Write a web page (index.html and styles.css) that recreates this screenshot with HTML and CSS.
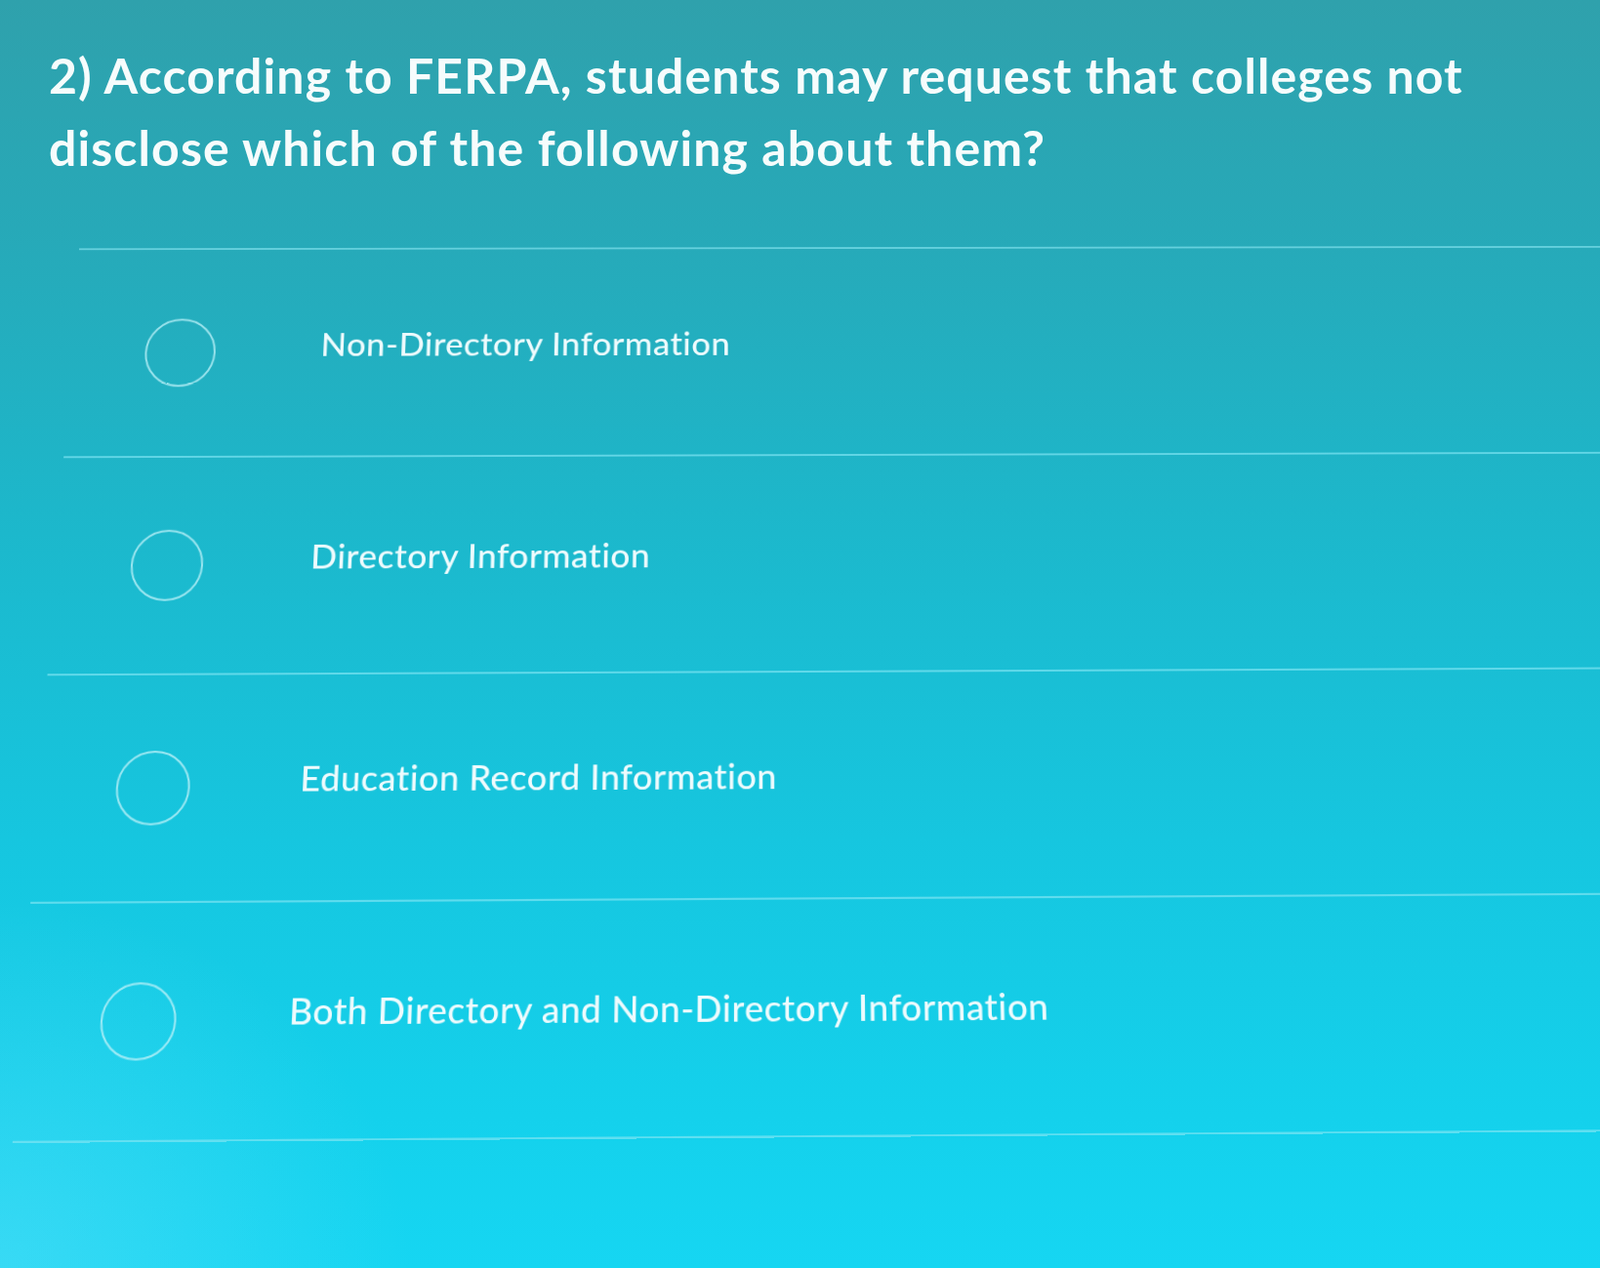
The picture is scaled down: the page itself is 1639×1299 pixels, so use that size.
FILE: index.html
```html
<!DOCTYPE html>
<html lang="en">
<head>
<meta charset="utf-8">
<title>FERPA question</title>
<link rel="stylesheet" href="styles.css">
</head>
<body>
<main class="screen">
  <p class="question">2) According to FERPA, students may request that colleges not disclose which of the following about them?</p>
  <div class="answers">
    <ul class="options">
      <li class="option"><span class="radio"></span><span class="label">Non-Directory Information</span></li>
      <li class="option"><span class="radio"></span><span class="label">Directory Information</span></li>
      <li class="option"><span class="radio"></span><span class="label">Education Record Information</span></li>
      <li class="option"><span class="radio"></span><span class="label">Both Directory and Non-Directory Information</span></li>
    </ul>
  </div>
</main>
</body>
</html>
```
FILE: styles.css
```css
html, body {
  margin: 0;
  padding: 0;
  overflow: hidden;
}

body {
  width: 1639px;
  height: 1299px;
  background:
    radial-gradient(ellipse 420px 380px at 0% 100%, rgba(120, 225, 250, 0.35), rgba(120, 225, 250, 0) 100%),
    linear-gradient(180deg, #2fa1ac 0%, #27a9b8 18%, #1cb8cc 42%, #16c6df 66%, #14d1ec 88%, #16d6f2 100%);
  font-family: "Lato", "Open Sans", sans-serif;
  color: #f4fbfc;
}

.screen {
  width: 1639px;
  height: 1299px;
  display: grid;
  grid-template: 1fr / 1fr;
}

.question {
  grid-area: 1 / 1;
  align-self: start;
  z-index: 1;
  margin: 40px 0 0 50px;
  max-width: 1540px;
  font-size: 50px;
  line-height: 74px;
  font-weight: 700;
  font-style: normal;
  letter-spacing: 1.1px;
  color: #f6fcfc;
}

.answers {
  grid-area: 1 / 1;
  box-sizing: border-box;
  padding: 235px 0 0 10px;
  transform-origin: 50% 50%;
  transform: perspective(800px) rotateX(4.7deg) rotateY(0.26deg) rotateZ(-0.25deg);
}

.options {
  list-style: none;
  margin: 0 -140px 0 45px;
  padding: 0;
  border-top: 2px solid rgba(120, 220, 232, 0.75);
}

.option {
  box-sizing: border-box;
  height: 226px;
  display: flex;
  align-items: flex-start;
  padding-top: 76px;
  border-bottom: 2px solid rgba(125, 228, 242, 0.7);
}

.radio {
  flex: none;
  width: 74px;
  height: 74px;
  box-sizing: border-box;
  margin-left: 77px;
  border: 2.5px solid rgba(185, 240, 248, 0.8);
  border-radius: 50%;
}

.label {
  margin: 8px 0 0 110px;
  font-size: 35.5px;
  line-height: 40px;
  font-weight: 500;
  color: #eefbfd;
  letter-spacing: 0.5px;
}
```
